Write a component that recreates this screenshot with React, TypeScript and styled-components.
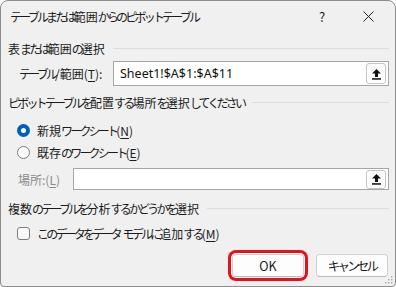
import React from "react";
import styled, { createGlobalStyle } from "styled-components";

const GlobalStyle = createGlobalStyle`
  html, body {
    margin: 0;
    padding: 0;
    background: #ffffff;
  }
  body {
    font-family: "Noto Sans CJK JP", "Noto Sans", sans-serif;
    font-size: 12px;
    color: #1b1b1b;
  }
`

const Column = styled.div`
  display: flex;
  flex-direction: column;
`
const Row = styled.div`
  display: flex;
  flex-direction: row;
  align-items: center;
`

// kana in the dialog font is proportional and narrower than kanji
const Kana = styled.span`
  letter-spacing: -2.8px;
`

function jp(text: string) {
  return text.split(/([\u3040-\u30ff]+)/).map((part, i) =>
    /^[\u3040-\u30ff]+$/.test(part) ? <Kana key={i}>{part}</Kana> : <React.Fragment key={i}>{part}</React.Fragment>
  );
}

const Dialog = styled(Column)`
  position: relative;
  width: 396px;
  height: 287px;
  box-sizing: border-box;
  border: 1px solid #8c8c8c;
  border-radius: 8px 8px 4px 4px;
  background: #f0f0f0;
  overflow: hidden;
`

const TitleBar = styled(Row)`
  height: 31px;
  padding-left: 9px;
`
const TitleText = styled.div`
  flex: 1;
  font-size: 12px;
  white-space: nowrap;
`
const HelpMark = styled.div`
  width: 20px;
  text-align: center;
  font-size: 13px;
  margin-right: 26px;
`
const CloseBtn = styled.div`
  display: flex;
  width: 20px;
  justify-content: center;
  margin-right: 17px;
`

const Body = styled(Column)`
  padding: 6px 6px 0 7px;
`

const GroupHeader = styled(Row)<{ $top: number }>`
  height: 20px;
  margin-top: ${({ $top }) => $top}px;
  gap: 8px;
  font-size: 12px;
  white-space: nowrap;
  &::after {
    content: "";
    flex: 1;
    border-top: 1px solid #dcdcdc;
  }
`

const FieldRow = styled(Row)<{ $top: number; $indent: number }>`
  margin-top: ${({ $top }) => $top}px;
  padding-left: ${({ $indent }) => $indent}px;
`

const Label = styled.div<{ $width: number; $muted?: boolean }>`
  width: ${({ $width }) => $width}px;
  font-size: 12px;
  white-space: nowrap;
  color: ${({ $muted }) => ($muted ? "#8a8a8a" : "#1b1b1b")};
  u {
    text-underline-offset: 2px;
  }
`

const RangeBox = styled(Row)<{ $height: number }>`
  flex: 1;
  height: ${({ $height }) => $height}px;
  box-sizing: border-box;
  border: 1px solid #a6a6a6;
  background: #ffffff;
  padding: 0 2px 0 6px;
  justify-content: space-between;
`
const RangeText = styled.div`
  font-family: "Noto Sans", sans-serif;
  font-size: 12.5px;
  color: #111;
`
const RefButton = styled.div<{ $height: number }>`
  display: flex;
  align-items: center;
  justify-content: center;
  width: 20px;
  height: ${({ $height }) => $height}px;
  box-sizing: border-box;
  border: 1px solid #c4c4c4;
  border-radius: 3px;
  background: #fdfdfd;
`

const OptionRow = styled(Row)<{ $top: number }>`
  height: 20px;
  margin-top: ${({ $top }) => $top}px;
  padding-left: 9px;
  gap: 7px;
  font-size: 12px;
  white-space: nowrap;
  u {
    text-underline-offset: 2px;
  }
`

const Radio = styled.div<{ $checked?: boolean }>`
  width: 13px;
  height: 13px;
  box-sizing: border-box;
  border-radius: 50%;
  ${({ $checked }) =>
    $checked
      ? `background: #ffffff; border: 4px solid #005fb8;`
      : `background: #fbfbfb; border: 1px solid #7d7d7d;`}
`

const CheckBox = styled.div`
  width: 13px;
  height: 13px;
  box-sizing: border-box;
  border: 1px solid #7d7d7d;
  border-radius: 3px;
  background: #fbfbfb;
`

const ButtonBar = styled(Row)`
  justify-content: flex-end;
  gap: 12px;
  margin-top: 11px;
  padding-right: 1px;
`
const Button = styled.div<{ $highlight?: boolean }>`
  display: flex;
  align-items: center;
  justify-content: center;
  width: 72px;
  height: 23px;
  box-sizing: border-box;
  border: 1px solid #d0d0d0;
  border-bottom-color: #bcbcbc;
  border-radius: 4px;
  background: #fdfdfd;
  font-size: 12.5px;
  box-shadow: ${({ $highlight }) =>
    $highlight ? "0 0 0 1px #fbfbfb, 0 0 0 4px #e3121c" : "none"};
`

const Grip = styled.svg`
  position: absolute;
  right: 2px;
  bottom: 2px;
`

const UpArrow = () => (
  <svg width="11" height="12" viewBox="0 0 11 12">
    <path d="M5.5 1 L10 5.6 H7 V9 H4 V5.6 H1 Z" fill="#111" />
    <rect x="1" y="10.2" width="9" height="1.5" fill="#111" />
  </svg>
)

const App = () => {
  return (
    <>
      <GlobalStyle />
      <Dialog>
        <TitleBar>
          <TitleText>{jp("テーブルまたは範囲からのピボットテーブル")}</TitleText>
          <HelpMark>?</HelpMark>
          <CloseBtn>
            <svg width="11" height="11" viewBox="0 0 11 11">
              <path d="M0.5 0.5 L10.5 10.5 M10.5 0.5 L0.5 10.5" stroke="#222" strokeWidth="1" />
            </svg>
          </CloseBtn>
        </TitleBar>
        <Body>
          <GroupHeader $top={0}>
            <span>{jp("表または範囲の選択")}</span>
          </GroupHeader>
          <FieldRow $top={3} $indent={11}>
            <Label $width={94}>
              {jp("テーブル/範囲(")}<u>T</u>):
            </Label>
            <RangeBox $height={25}>
              <RangeText>Sheet1!$A$1:$A$11</RangeText>
              <RefButton $height={21}>
                <UpArrow />
              </RefButton>
            </RangeBox>
          </FieldRow>

          <GroupHeader $top={6}>
            <span>{jp("ピボットテーブルを配置する場所を選択してください")}</span>
          </GroupHeader>
          <OptionRow $top={8}>
            <Radio $checked />
            <span>
              {jp("新規ワークシート(")}<u>N</u>)
            </span>
          </OptionRow>
          <OptionRow $top={2}>
            <Radio />
            <span>
              {jp("既存のワークシート(")}<u>E</u>)
            </span>
          </OptionRow>
          <FieldRow $top={6} $indent={10}>
            <Label $width={55} $muted>
              場所:(<u>L</u>)
            </Label>
            <RangeBox $height={22}>
              <RangeText />
              <RefButton $height={19}>
                <UpArrow />
              </RefButton>
            </RangeBox>
          </FieldRow>

          <GroupHeader $top={8}>
            <span>{jp("複数のテーブルを分析するかどうかを選択")}</span>
          </GroupHeader>
          <OptionRow $top={5}>
            <CheckBox />
            <span>
              {jp("このデータをデータ モデルに追加する(")}<u>M</u>)
            </span>
          </OptionRow>

          <ButtonBar>
            <Button $highlight>OK</Button>
            <Button>{jp("キャンセル")}</Button>
          </ButtonBar>
        </Body>
        <Grip width="8" height="8" viewBox="0 0 8 8">
          <rect x="6" y="0" width="1.4" height="1.4" fill="#a8a8a8" />
          <rect x="3" y="3" width="1.4" height="1.4" fill="#a8a8a8" />
          <rect x="6" y="3" width="1.4" height="1.4" fill="#a8a8a8" />
          <rect x="0" y="6" width="1.4" height="1.4" fill="#a8a8a8" />
          <rect x="3" y="6" width="1.4" height="1.4" fill="#a8a8a8" />
          <rect x="6" y="6" width="1.4" height="1.4" fill="#a8a8a8" />
        </Grip>
      </Dialog>
    </>
  );
};

export default App;
